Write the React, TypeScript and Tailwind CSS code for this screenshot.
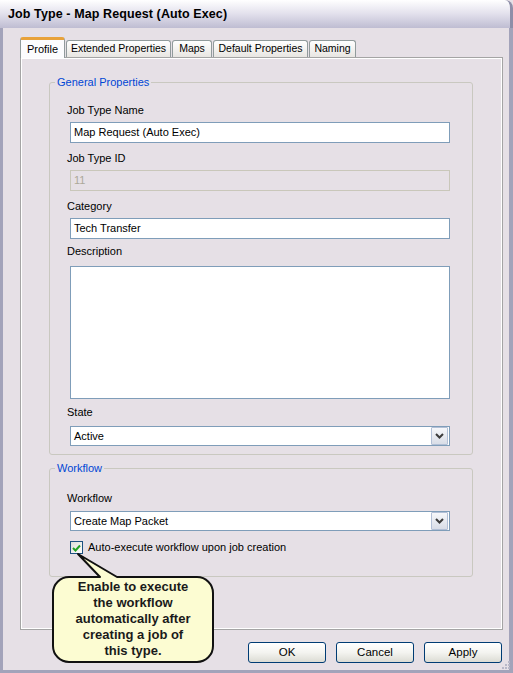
import type { ReactNode } from 'react';

const TABS = [
  { label: 'Profile', w: 'w-[45px]', active: true },
  { label: 'Extended Properties', w: 'w-[105px]', active: false },
  { label: 'Maps', w: 'w-[40px]', active: false },
  { label: 'Default Properties', w: 'w-[95px]', active: false },
  { label: 'Naming', w: 'w-[47px]', active: false },
];

function Label({ children, className = '' }: { children: ReactNode; className?: string }) {
  return <div className={`ml-[17px] h-[14px] leading-[14px] ${className}`}>{children}</div>;
}

function TextBox({ value, disabled = false, className = '' }: { value: string; disabled?: boolean; className?: string }) {
  return (
    <div
      className={[
        'ml-[20px] w-[380px] h-[21px] border flex items-center pl-[3px]',
        disabled ? 'border-[#c9c7ba] bg-[#e6e0e6] text-[#aca899]' : 'border-[#7f9db9] bg-white',
        className,
      ].join(' ')}
    >
      {value}
    </div>
  );
}

function Chevron() {
  return (
    <svg width="9" height="6" viewBox="0 0 9 6">
      <polyline points="1,1 4.5,4.5 8,1" fill="none" stroke="#3c3c3c" strokeWidth="2" />
    </svg>
  );
}

function ComboBox({ value, className = '' }: { value: string; className?: string }) {
  return (
    <div className={`ml-[20px] w-[380px] h-[20px] border border-[#7f9db9] bg-white flex items-center ${className}`}>
      <span className="flex-1 pl-[3px]">{value}</span>
      <div className="mr-px w-[17px] h-[18px] border border-[#b2bfd6] rounded-[1px] bg-gradient-to-b from-[#f6f7fa] to-[#d9dde7] flex items-center justify-center">
        <Chevron />
      </div>
    </div>
  );
}

function Group({ title, children, className = '' }: { title: string; children: ReactNode; className?: string }) {
  return (
    <fieldset className={`ml-[28px] w-[424px] border border-[#c9c8c0] rounded-[3px] ${className}`}>
      <legend className="ml-[5px] px-[2px] text-[#0046d5] leading-[13px]">{title}</legend>
      {children}
    </fieldset>
  );
}

function Button({ children }: { children: ReactNode }) {
  return (
    <button className="w-[78px] h-[21px] rounded-[3px] border border-[#003c74] bg-gradient-to-b from-white via-[#f4f4f0] to-[#dcdcd4] text-[11.5px] leading-none">
      {children}
    </button>
  );
}

export default function App() {
  return (
    <div className="relative w-[513px] h-[673px] overflow-hidden bg-[#e6e0e6] text-black text-[11px] font-['Liberation_Sans',Arial,sans-serif]">
      {/* Title bar */}
      <div className="h-[28px] rounded-tr-[8px] border-r-[3px] border-[#8e8ea8] bg-gradient-to-b from-[#ffffff] via-[#e2e0ec] to-[#bfbdd2] flex items-center pl-[8px]">
        <span className="font-bold text-[12.5px] tracking-[0.1px]">Job Type - Map Request (Auto Exec)</span>
      </div>

      <div className="h-[645px] flex flex-col border-l-[3px] border-r-[4px] border-b-[3px] border-[#a3a3ba]">
        {/* Tabs */}
        <div className="mt-[9px] ml-[17px] h-[20px] flex items-end gap-[1px] text-[10.5px]">
          {TABS.map((t) =>
            t.active ? (
              <div
                key={t.label}
                className={`${t.w} relative z-10 -mb-px h-[21px] rounded-t-[3px] border-x border-[#919b9c] border-t-[3px] border-t-[#e8a23a] bg-[#fcfcfe] flex items-center justify-center text-[11px]`}
              >
                {t.label}
              </div>
            ) : (
              <div
                key={t.label}
                className={`${t.w} h-[17px] rounded-t-[3px] border border-b-0 border-[#919b9c] bg-gradient-to-b from-white to-[#e8e6e2] flex items-center justify-center`}
              >
                {t.label}
              </div>
            )
          )}
        </div>

        {/* Tab panel */}
        <div className="ml-[17px] w-[483px] h-[573px] border border-[#a4a4a4] shadow-[inset_1px_1px_0_#ffffff,inset_-1px_-1px_0_#ffffff] pt-[18px]">
          <Group title="General Properties" className="pb-[8px]">
            <Label className="mt-[14px]">Job Type Name</Label>
            <TextBox value="Map Request (Auto Exec)" className="mt-[5px]" />
            <Label className="mt-[8px]">Job Type ID</Label>
            <TextBox value="11" disabled className="mt-[5px]" />
            <Label className="mt-[8px]">Category</Label>
            <TextBox value="Tech Transfer" className="mt-[5px]" />
            <Label className="mt-[5px]">Description</Label>
            <div className="mt-[8px] ml-[20px] w-[380px] h-[133px] border border-[#7f9db9] bg-white" />
            <Label className="mt-[6px]">State</Label>
            <ComboBox value="Active" className="mt-[7px]" />
          </Group>

          <Group title="Workflow" className="mt-[7px] pb-[22px]">
            <Label className="mt-[16px]">Workflow</Label>
            <ComboBox value="Create Map Packet" className="mt-[6px]" />
            <div className="mt-[10px] ml-[20px] flex items-center gap-[5px] h-[13px]">
              <div className="w-[13px] h-[13px] border border-[#1c5180] bg-gradient-to-br from-[#dcdcd7] to-white flex items-center justify-center">
                <svg width="9" height="8" viewBox="0 0 9 8">
                  <polyline points="1,4 3.5,6.5 8,1.5" fill="none" stroke="#21a121" strokeWidth="2" />
                </svg>
              </div>
              <span>Auto-execute workflow upon job creation</span>
            </div>
          </Group>
        </div>

        {/* Buttons */}
        <div className="mt-[12px] flex justify-end gap-[10px] pr-[7px]">
          <Button>OK</Button>
          <Button>Cancel</Button>
          <Button>Apply</Button>
        </div>
      </div>

      {/* Resize grip */}
      <svg className="absolute right-[3px] bottom-[4px]" width="9" height="9" viewBox="0 0 9 9">
        {[[7, 1], [7, 4], [4, 4], [7, 7], [4, 7], [1, 7]].map(([x, y]) => (
          <rect key={`${x}-${y}`} x={x} y={y} width="2" height="2" fill="#b8b8c8" />
        ))}
      </svg>

      {/* Callout */}
      <div className="absolute left-[50px] top-[550px] w-[168px] h-[116px]">
        <svg className="absolute inset-0" width="168" height="116" viewBox="0 0 168 116">
          <path
            d="M19 27 L50 27 L28 4 L67 27 L147 27 A16 16 0 0 1 163 43 L163 96 A16 16 0 0 1 147 112 L19 112 A16 16 0 0 1 3 96 L3 43 A16 16 0 0 1 19 27 Z"
            fill="#fcfcd2"
            stroke="#111111"
            strokeWidth="2"
            strokeLinejoin="round"
          />
        </svg>
        <div className="absolute left-[3px] top-[29px] w-[160px] text-center font-bold text-[13px] leading-[16px] text-[#1a1a1a]">
          Enable to execute
          <br />
          the workflow
          <br />
          automatically after
          <br />
          creating a job of
          <br />
          this type.
        </div>
      </div>
    </div>
  );
}
